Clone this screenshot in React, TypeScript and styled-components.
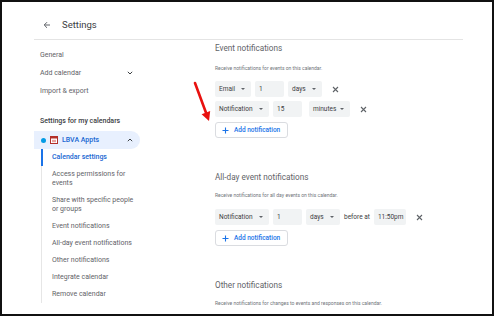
import React from "react";
import styled, { createGlobalStyle } from "styled-components";

const GlobalStyle = createGlobalStyle`
  html, body {
    margin: 0;
    padding: 0;
    background: #fff;
    font-family: Roboto, "Liberation Sans", Arial, sans-serif;
  }
`;

const Frame = styled.div`
  position: relative;
  width: 494px;
  height: 316px;
  border: 2px solid #111;
  box-sizing: border-box;
  display: flex;
  flex-direction: column;
  overflow: hidden;
  background: #fff;
`;

const Header = styled.div`
  margin-left: 32px;
  width: 429px;
  height: 38px;
  box-sizing: border-box;
  border-bottom: 1.5px solid #e4e4e4;
  display: flex;
  align-items: flex-end;
  padding: 0 0 8px 9px;
  gap: 11px;
`;

const Title = styled.div`
  font-size: 9.5px;
  line-height: 12px;
  color: #3c4043;
`;

const Body = styled.div`
  display: flex;
  flex: 1;
  align-items: flex-start;
`;

const Sidebar = styled.div`
  margin-left: 32px;
  width: 106px;
  padding-top: 6px;
  display: flex;
  flex-direction: column;
`;

const NavItem = styled.div`
  height: 18px;
  padding: 0 7px 0 6px;
  display: flex;
  align-items: center;
  justify-content: space-between;
  font-size: 7px;
  color: #5f6368;
`;

const SectionLabel = styled(NavItem)`
  margin-top: 12px;
  font-weight: 500;
  color: #3c4043;
`;

const CalendarRow = styled.div`
  margin-top: 1px;
  height: 18px;
  background: #e8f0fe;
  border-radius: 0 9px 9px 0;
  display: flex;
  align-items: center;
  padding: 0 7px 0 7px;
  gap: 4px;
  font-size: 7px;
  font-weight: 500;
  color: #1967d2;
`;

const Dot = styled.span`
  width: 5px;
  height: 5px;
  border-radius: 50%;
  background: #039be5;
`;

const Grow = styled.span`
  flex: 1;
`;

const SubList = styled.div`
  margin-left: 7px;
  border-left: 1px solid #e6e6e6;
  display: flex;
  flex-direction: column;
`;

const SubItem = styled.div<{ active?: boolean }>`
  padding: 4px 0 4px 9px;
  margin-left: -1px;
  border-left: 2px solid ${(p) => (p.active ? "#1a73e8" : "transparent")};
  font-size: 7px;
  line-height: 9px;
  color: ${(p) => (p.active ? "#1967d2" : "#5f6368")};
  font-weight: ${(p) => (p.active ? 500 : 400)};
`;

const Main = styled.div`
  margin-left: 75px;
  padding-top: 2px;
  display: flex;
  flex-direction: column;
`;

const Heading = styled.div<{ gap: number }>`
  margin-top: ${(p) => p.gap}px;
  font-size: 8.2px;
  line-height: 12px;
  color: #5f6368;
`;

const Desc = styled.div<{ gap: number }>`
  margin-top: ${(p) => p.gap}px;
  font-size: 5px;
  line-height: 8px;
  color: #70757a;
`;

const Row = styled.div<{ gap: number }>`
  margin-top: ${(p) => p.gap}px;
  display: flex;
  align-items: center;
  gap: 4px;
  height: 16px;
`;

const Field = styled.div<{ w: number; ml?: number }>`
  width: ${(p) => p.w}px;
  margin-left: ${(p) => p.ml ?? 0}px;
  height: 16px;
  box-sizing: border-box;
  background: #f1f3f4;
  border-radius: 2px;
  display: flex;
  align-items: center;
  justify-content: space-between;
  padding: 0 6px 0 4px;
  font-size: 6.5px;
  color: #3c4043;
`;

const Caret = styled.span`
  width: 0;
  height: 0;
  border-left: 2px solid transparent;
  border-right: 2px solid transparent;
  border-top: 2px solid #5f6368;
`;

const Plain = styled.span`
  font-size: 6.5px;
  color: #3c4043;
`;

const Remove = styled.span<{ ml: number }>`
  margin-left: ${(p) => p.ml}px;
  display: flex;
`;

const AddButton = styled.div<{ gap: number }>`
  margin-top: ${(p) => p.gap}px;
  width: 73px;
  height: 16px;
  box-sizing: border-box;
  border: 1px solid #dadce0;
  border-radius: 3px;
  display: flex;
  align-items: center;
  padding-left: 6px;
  gap: 5px;
  font-size: 6.5px;
  font-weight: 500;
  color: #1a73e8;
`;

const Pointer = styled.svg`
  position: absolute;
  left: 188px;
  top: 76px;
`;

const Chevron = ({ up }: { up?: boolean }) => (
  <svg width="6" height="4" viewBox="0 0 6 4">
    <polyline
      points={up ? "0.8,3.2 3,1 5.2,3.2" : "0.8,0.8 3,3 5.2,0.8"}
      fill="none"
      stroke="#3c4043"
      strokeWidth="1"
    />
  </svg>
);

const Close = () => (
  <svg width="7" height="7" viewBox="0 0 7 7">
    <path d="M1 1 L6 6 M6 1 L1 6" stroke="#5f6368" strokeWidth="1.1" />
  </svg>
);

const Plus = () => (
  <svg width="7" height="7" viewBox="0 0 7 7">
    <path d="M3.5 0.5 V6.5 M0.5 3.5 H6.5" stroke="#1a73e8" strokeWidth="1.1" />
  </svg>
);

const BackArrow = () => (
  <svg width="8" height="8" viewBox="0 0 8 8" style={{ marginBottom: 2 }}>
    <path d="M7 4 H1.5 M4 1.2 L1.2 4 L4 6.8" fill="none" stroke="#5f6368" strokeWidth="1" />
  </svg>
);

const CalIcon = () => (
  <svg width="8" height="8" viewBox="0 0 8 8">
    <rect x="0.5" y="0.5" width="7" height="7" fill="#fff" stroke="#b3312b" />
    <rect x="0.5" y="0.5" width="7" height="2" fill="#b3312b" />
    <rect x="2" y="3.8" width="4" height="2.4" fill="#e8a09a" />
  </svg>
);

const subItems = [
  ["Calendar settings"],
  ["Access permissions for", "events"],
  ["Share with specific people", "or groups"],
  ["Event notifications"],
  ["All-day event notifications"],
  ["Other notifications"],
  ["Integrate calendar"],
  ["Remove calendar"],
];

export default function App() {
  return (
    <>
      <GlobalStyle />
      <Frame>
        <Header>
          <BackArrow />
          <Title>Settings</Title>
        </Header>
        <Body>
          <Sidebar>
            <NavItem>General</NavItem>
            <NavItem>
              Add calendar
              <Chevron />
            </NavItem>
            <NavItem>Import &amp; export</NavItem>
            <SectionLabel>Settings for my calendars</SectionLabel>
            <CalendarRow>
              <Dot />
              <CalIcon />
              <Grow>LBVA Appts</Grow>
              <Chevron up />
            </CalendarRow>
            <SubList>
              {subItems.map((lines, i) => (
                <SubItem key={i} active={i === 0}>
                  {lines.map((l) => (
                    <div key={l}>{l}</div>
                  ))}
                </SubItem>
              ))}
            </SubList>
          </Sidebar>
          <Main>
            <Heading gap={0}>Event notifications</Heading>
            <Desc gap={10}>Receive notifications for events on this calendar.</Desc>
            <Row gap={9}>
              <Field w={36}>
                Email <Caret />
              </Field>
              <Field w={29}>1</Field>
              <Field w={34}>
                days <Caret />
              </Field>
              <Remove ml={6}>
                <Close />
              </Remove>
            </Row>
            <Row gap={4}>
              <Field w={54}>
                Notification <Caret />
              </Field>
              <Field w={29}>15</Field>
              <Field w={41} ml={3}>
                minutes <Caret />
              </Field>
              <Remove ml={6}>
                <Close />
              </Remove>
            </Row>
            <AddButton gap={5}>
              <Plus />
              Add notification
            </AddButton>
            <Heading gap={33}>All-day event notifications</Heading>
            <Desc gap={8}>Receive notifications for all day events on this calendar.</Desc>
            <Row gap={10}>
              <Field w={54}>
                Notification <Caret />
              </Field>
              <Field w={29}>1</Field>
              <Field w={34}>
                days <Caret />
              </Field>
              <Plain>before at</Plain>
              <Field w={32}>11:50pm</Field>
              <Remove ml={6}>
                <Close />
              </Remove>
            </Row>
            <AddButton gap={5}>
              <Plus />
              Add notification
            </AddButton>
            <Heading gap={33}>Other notifications</Heading>
            <Desc gap={8}>Receive notifications for changes to events and responses on this calendar.</Desc>
          </Main>
        </Body>
        <Pointer width="25" height="46" viewBox="0 0 25 46">
          <line x1="5" y1="5" x2="16.2" y2="35.2" stroke="#e8110f" strokeWidth="2.6" strokeLinecap="round" />
          <polygon points="19,43 20.2,33 11.6,36.2" fill="#e8110f" />
        </Pointer>
      </Frame>
    </>
  );
}
